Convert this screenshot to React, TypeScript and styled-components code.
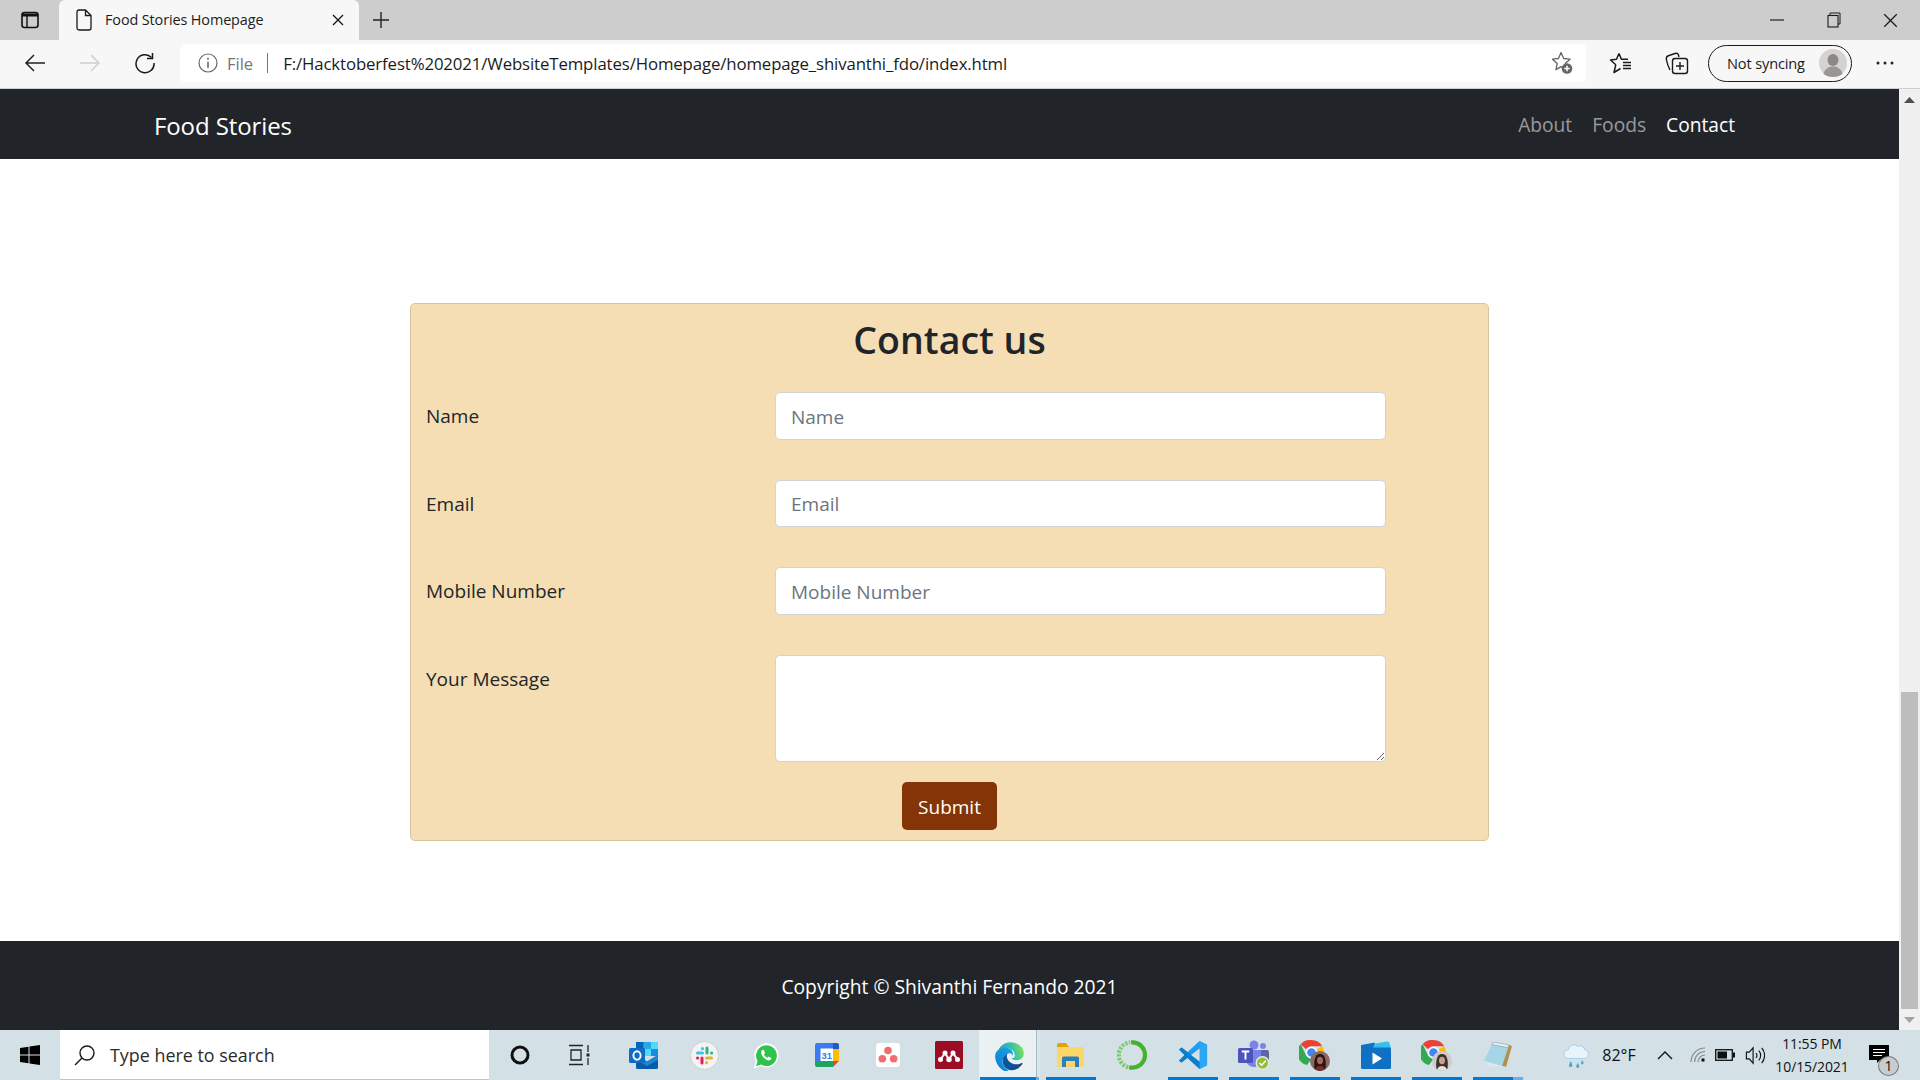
import React from "react";
import styled, { createGlobalStyle } from "styled-components";

const FONT = `"Open Sans", "Noto Sans", "Liberation Sans", sans-serif`;

const Global = createGlobalStyle`
  html, body { margin: 0; padding: 0; height: 100%; overflow: hidden; background: #fff; }
  body { font-family: ${FONT}; color: #212529; }
  * { box-sizing: border-box; }
`;

const Screen = styled.div`
  width: 1920px;
  height: 1080px;
  display: flex;
  flex-direction: column;
  overflow: hidden;
`;

/* ---------- browser chrome ---------- */
const TabStrip = styled.div`
  height: 40px;
  background: #cdcdcd;
  display: flex;
  align-items: center;
  flex: none;
`;
const TabActions = styled.div`
  width: 59px;
  height: 40px;
  display: flex;
  align-items: center;
  justify-content: center;
`;
const Tab = styled.div`
  width: 300px;
  height: 40px;
  background: #f7f7f7;
  border-radius: 6px 6px 0 0;
  display: flex;
  align-items: center;
  padding: 0 15px 0 16px;
`;
const TabTitle = styled.span`
  flex: 1;
  margin-left: 12px;
  padding-bottom: 1px;
  font-size: 14.4px;
  letter-spacing: -0.1px;
  color: #1c1c1c;
  white-space: nowrap;
`;
const NewTab = styled.div`
  width: 44px;
  height: 40px;
  display: flex;
  align-items: center;
  justify-content: center;
`;
const WindowControls = styled.div`
  margin-left: auto;
  display: flex;
  padding-right: 1px;
`;
const WindowButton = styled.div`
  width: 57px;
  height: 36px;
  display: flex;
  align-items: center;
  justify-content: center;
`;
const Toolbar = styled.div`
  height: 49px;
  background: #f7f7f7;
  border-bottom: 1px solid #cfcfcf;
  display: flex;
  align-items: center;
  flex: none;
  padding-bottom: 2px;
`;
const NavIcons = styled.div`
  width: 180px;
  display: flex;
  padding-left: 7px;
`;
const ToolIcon = styled.div`
  width: 55px;
  height: 36px;
  display: flex;
  align-items: center;
  justify-content: center;
`;
const AddressBar = styled.div`
  width: 1406px;
  height: 38px;
  background: #fff;
  border-radius: 5px;
  display: flex;
  align-items: center;
  padding: 0 11px 0 18px;
  font-size: 16.8px;
`;
const FileLabel = styled.span`
  margin-left: 9px;
  color: #767676;
  font-size: 16.5px;
`;
const Divider = styled.span`
  width: 1px;
  height: 20px;
  background: #767676;
  margin: 0 15px 0 14px;
`;
const Url = styled.span`
  flex: 1;
  color: #1b1b1b;
  white-space: nowrap;
  letter-spacing: -0.12px;
`;
const ToolRight = styled.div`
  display: flex;
  align-items: center;
  margin-left: 7px;
`;
const SquareIcon = styled.div`
  width: 56px;
  height: 36px;
  display: flex;
  align-items: center;
  justify-content: center;
`;
const SyncPill = styled.div`
  width: 144px;
  height: 37px;
  margin-left: 3px;
  border: 1.5px solid #1a1a1a;
  border-radius: 19px;
  display: flex;
  align-items: center;
  justify-content: space-between;
  padding: 0 4px 0 18px;
  font-size: 14.6px;
  letter-spacing: -0.15px;
  color: #1b1b1b;
`;
const Dots = styled.div`
  width: 66px;
  display: flex;
  align-items: center;
  justify-content: center;
`;

/* ---------- page ---------- */
const Viewport = styled.div`
  flex: 1;
  min-height: 0;
  display: flex;
`;
const Page = styled.div`
  flex: 1;
  min-width: 0;
  display: flex;
  flex-direction: column;
  background: #fff;
`;
const Navbar = styled.nav`
  height: 70px;
  background: #212529;
  display: flex;
  align-items: center;
  justify-content: space-between;
  padding: 0 154px;
  flex: none;
`;
const Brand = styled.a`
  font-size: 24px;
  color: #fff;
  letter-spacing: -0.1px;
  padding-top: 3px;
`;
const NavLinks = styled.div`
  display: flex;
  gap: 20px;
  padding-right: 10px;
`;
const NavLink = styled.a<{ $active?: boolean }>`
  font-size: 19.2px;
  color: ${(p) => (p.$active ? "#fff" : "rgba(255,255,255,.55)")};
`;
const Main = styled.main`
  flex: 1;
  padding-top: 144px;
  display: flex;
  justify-content: center;
  align-items: flex-start;
`;
const Card = styled.form`
  width: 1079px;
  height: 538px;
  background: #f5deb3;
  border: 1px solid #d8c49c;
  border-radius: 5px;
  padding: 12px 15px 10px;
`;
const Title = styled.h2`
  margin: 0 0 28px;
  font-size: 37.5px;
  line-height: 48px;
  font-weight: 600;
  text-align: center;
  color: #212529;
`;
const Row = styled.div`
  display: grid;
  grid-template-columns: 349px 611px;
  margin-bottom: 40px;
`;
const LastRow = styled(Row)`
  margin-bottom: 20px;
`;
const Label = styled.label`
  display: block;
  height: 47.5px;
  padding-top: 1px;
  font-size: 19px;
  line-height: 47.5px;
  color: #212529;
`;
const Input = styled.input`
  height: 47.5px;
  width: 611px;
  padding: 2px 15px 0;
  border: 1px solid #ced4da;
  border-radius: 5px;
  background: #fff;
  font-family: ${FONT};
  font-size: 19px;
  outline: none;
  &::placeholder { color: #6c757d; opacity: 1; }
`;
const TextArea = styled.textarea`
  display: block;
  height: 107px;
  width: 611px;
  padding: 8px 15px;
  border: 1px solid #ced4da;
  border-radius: 5px;
  background: #fff;
  font-family: ${FONT};
  font-size: 19px;
  resize: vertical;
  outline: none;
`;
const SubmitRow = styled.div`
  display: flex;
  justify-content: center;
`;
const Submit = styled.button`
  width: 95px;
  height: 48px;
  padding: 2px 0 0;
  border: none;
  border-radius: 5px;
  background: #843406;
  color: #fff;
  font-family: ${FONT};
  font-size: 19px;
`;
const Footer = styled.footer`
  height: 89px;
  flex: none;
  background: #212529;
  color: #fff;
  display: flex;
  align-items: center;
  justify-content: center;
  font-size: 19.25px;
  padding-top: 2px;
`;

/* ---------- scrollbar ---------- */
const Scrollbar = styled.div`
  width: 21px;
  flex: none;
  background: #f0f0f0;
  display: flex;
  flex-direction: column;
`;
const ScrollButton = styled.div`
  height: 21px;
  flex: none;
  display: flex;
  align-items: center;
  justify-content: center;
`;
const ScrollTrack = styled.div`
  flex: 1;
  display: flex;
  flex-direction: column;
  justify-content: flex-end;
  align-items: center;
`;
const ScrollThumb = styled.div`
  width: 17px;
  height: 317px;
  background: #bdbdbd;
`;

/* ---------- taskbar ---------- */
const Taskbar = styled.div`
  height: 50px;
  flex: none;
  background: #d3e1e7;
  display: flex;
  align-items: stretch;
`;
const StartButton = styled.div`
  width: 60px;
  display: flex;
  align-items: center;
  justify-content: center;
`;
const SearchBox = styled.div`
  width: 429px;
  background: #fff;
  border-bottom: 1px solid #c4c4c4;
  display: flex;
  align-items: center;
  padding-left: 14px;
  font-size: 17.9px;
  color: #2b2b2b;
`;
const SearchText = styled.span`
  margin-left: 14px;
`;
const TaskButton = styled.div<{ $width?: number }>`
  width: ${(p) => p.$width ?? 61}px;
  display: flex;
  align-items: center;
  justify-content: center;
`;
const PinnedGroup = styled.div`
  margin-left: 5px;
  display: flex;
`;
const AppButton = styled.div<{ $active?: boolean; $running?: boolean; $split?: number }>`
  position: relative;
  width: 61px;
  display: flex;
  align-items: center;
  justify-content: center;
  background: ${(p) =>
    p.$active
      ? "linear-gradient(90deg, #ebf1f3 0 57px, #a9bcc5 57px 58px, #d8e5ea 58px)"
      : "transparent"};
  &::after {
    content: "";
    display: ${(p) => (p.$running || p.$active ? "block" : "none")};
    position: absolute;
    bottom: 0;
    height: 3px;
    left: ${(p) => (p.$active ? "1px" : "5.5px")};
    right: ${(p) => (p.$active ? "1px" : "5.5px")};
    background: linear-gradient(
      90deg,
      #0078d4 ${(p) => p.$split ?? 100}%,
      #6aaee6 ${(p) => p.$split ?? 100}%
    );
  }
`;
const Tray = styled.div`
  margin-left: auto;
  display: flex;
  align-items: center;
  color: #111;
`;
const TrayItem = styled.div<{ $w: number }>`
  width: ${(p) => p.$w}px;
  display: flex;
  align-items: center;
  justify-content: center;
  font-size: 16px;
`;
const Clock = styled.div`
  width: 92px;
  font-size: 14px;
  line-height: 23px;
  text-align: center;
  letter-spacing: -0.1px;
  color: #111;
`;
const Notify = styled.div`
  width: 62px;
  height: 50px;
  position: relative;
  display: flex;
  align-items: center;
  padding: 0 0 3px 11px;
`;
const NotifyBadge = styled.span`
  position: absolute;
  left: 20px;
  top: 26px;
  width: 21px;
  height: 20px;
  border-radius: 50%;
  background: #c9ccce;
  border: 1px solid #777;
  font-size: 14px;
  line-height: 18px;
  text-align: center;
  color: #111;
`;

/* ---------- icons ---------- */
const S = { fill: "none", stroke: "#1a1a1a", strokeWidth: 1.3 };

const TabsIcon = () => (
  <svg width="20" height="20" viewBox="0 0 20 20"><rect x="2" y="2.5" width="16" height="15" rx="2.5" fill="none" stroke="#111" strokeWidth="1.6"/><path d="M2 3.5h16v3H2z" fill="#111"/><path d="M7 6v11" stroke="#111" strokeWidth="1.4"/></svg>
);
const FileIcon = () => (
  <svg width="18" height="22" viewBox="0 0 18 22"><path d="M3.5 1h7L16 6.5V19a2 2 0 0 1-2 2H4a2 2 0 0 1-2-2V3a2 2 0 0 1 1.500-2zM10.500 1v5.500H16" {...S}/></svg>
);
const CloseX = ({ size = 12, w = 1.4 }: { size?: number; w?: number }) => (
  <svg width={size} height={size} viewBox="0 0 12 12"><path d="M1 1l10 10M11 1L1 11" stroke="#1a1a1a" strokeWidth={w} fill="none"/></svg>
);
const Plus = () => (
  <svg width="18" height="18" viewBox="0 0 18 18"><path d="M9 1v16M1 9h16" stroke="#222" strokeWidth="1.4"/></svg>
);
const Minimize = () => (
  <svg width="14" height="14" viewBox="0 0 14 14"><path d="M0 7h14" stroke="#222" strokeWidth="1.2"/></svg>
);
const Restore = () => (
  <svg width="14" height="16" viewBox="0 0 14 16"><path d="M3 3V1h10v11h-2" {...S} strokeWidth={1}/><rect x="1" y="3.500" width="10" height="11.500" {...S} strokeWidth={1.1}/></svg>
);
const Back = () => (
  <svg width="22" height="20" viewBox="0 0 22 20"><path d="M21 10H2M10 2l-8 8 8 8" fill="none" stroke="#222" strokeWidth="1.5"/></svg>
);
const Forward = () => (
  <svg width="22" height="20" viewBox="0 0 22 20"><path d="M1 10h19M12 2l8 8-8 8" fill="none" stroke="#cfcfcf" strokeWidth="1.5"/></svg>
);
const Refresh = () => (
  <svg width="22" height="22" viewBox="0 0 22 22"><path d="M17.500 5.500A9 9 0 1 0 20 11" {...S} strokeWidth={1.5}/><path d="M18.500 1v5.500H13" {...S} strokeWidth={1.5}/></svg>
);
const Info = () => (
  <svg width="20" height="20" viewBox="0 0 20 20"><circle cx="10" cy="10" r="9" fill="none" stroke="#666" strokeWidth="1.200"/><path d="M10 8.500V15" stroke="#666" strokeWidth="1.500"/><circle cx="10" cy="5.800" r="1" fill="#666"/></svg>
);
const StarPlus = () => (
  <svg width="24" height="24" viewBox="0 0 24 24"><path d="M10 1.500l2.700 6 6.300.7-4.700 4.300 1.200 6.300-5.500-3.200-5 3 1.200-6.100L1.500 8.200l6-.7z" fill="none" stroke="#666" strokeWidth="1.300" strokeLinejoin="round"/><circle cx="16" cy="17.500" r="5.300" fill="#666"/><path d="M16 14.800v5.400M13.300 17.500h5.400" stroke="#fff" strokeWidth="1.500"/></svg>
);
const StarList = () => (
  <svg width="24" height="24" viewBox="0 0 24 24"><path d="M10 2.500L12.400 8.300H19M6.800 13.700L1.500 9l6-.7L10 2.500M6.800 13.700L5 21.500l6.500-4" {...S} strokeWidth={1.500} strokeLinejoin="round"/><path d="M14 11.500h8M14 14.500h8M14 17.500h8" stroke="#1a1a1a" strokeWidth="1.400"/></svg>
);
const Collections = () => (
  <svg width="24" height="26" viewBox="0 0 24 26"><path d="M5 20C3.500 17 2 13 1.500 10 1 8 2 6 4 5.500l6-2c1.500-.4 3 .2 3.500 1.500L14 7" {...S} strokeWidth={1.400}/><rect x="7.500" y="8.500" width="15" height="15" rx="2.500" {...S} strokeWidth={1.400}/><path d="M15 12v8M11 16h8" {...S} strokeWidth={1.400}/></svg>
);
const Avatar = () => (
  <svg width="28" height="28" viewBox="0 0 28 28"><circle cx="14" cy="14" r="14" fill="#d5d3cf"/><ellipse cx="14" cy="11" rx="5.500" ry="6" fill="#8c8985"/><path d="M4.500 25c1-5 5-7.500 9.500-7.500s8.500 2.500 9.500 7.500c-2.500 2-6 3-9.500 3s-7-1-9.500-3z" fill="#9a9793"/></svg>
);
const More = () => (
  <svg width="18" height="4" viewBox="0 0 18 4"><circle cx="2" cy="2" r="1.500" fill="#222"/><circle cx="9" cy="2" r="1.500" fill="#222"/><circle cx="16" cy="2" r="1.500" fill="#222"/></svg>
);
const Arrow = ({ down }: { down?: boolean }) => (
  <svg width="11" height="6" viewBox="0 0 11 6"><path d={down ? "M0 0h11L5.500 6z" : "M5.500 0L11 6H0z"} fill={down ? "#a3a3a3" : "#505050"}/></svg>
);
const WinLogo = () => (
  <svg width="20" height="20" viewBox="0 0 20 20"><path d="M0 3l8.500-1.200V9.500H0zM9.500 1.600L20 0v9.500H9.500zM0 10.500h8.500v7.700L0 17zM9.500 10.500H20V20L9.500 18.400z" fill="#000"/></svg>
);
const SearchGlass = () => (
  <svg width="22" height="22" viewBox="0 0 22 22"><circle cx="13" cy="9" r="7" fill="none" stroke="#1a1a1a" strokeWidth="1.400"/><path d="M8 14l-7 7" stroke="#1a1a1a" strokeWidth="1.500"/></svg>
);
const Cortana = () => (
  <svg width="20" height="20" viewBox="0 0 20 20"><circle cx="10" cy="10" r="8" fill="none" stroke="#111" strokeWidth="3"/></svg>
);
const TaskView = () => (
  <svg width="22" height="22" viewBox="0 0 22 22"><path d="M1 1.500h14M1 20.500h14M3 6h10v10H3zM20 1v7M20 14v7" fill="none" stroke="#222" strokeWidth="1.300"/><rect x="18.500" y="9.500" width="3" height="3" fill="#222"/></svg>
);
const Outlook = () => (
  <svg width="29" height="27" viewBox="0 0 29 27"><path d="M7 1.500A1.500 1.500 0 0 1 8.500 0h19A1.500 1.500 0 0 1 29 1.500V14H7z" fill="#1490df"/><path d="M7 0h7.500v7H7z" fill="#0364b8"/><path d="M14.500 0H22v7h-7.500z" fill="#28a8ea"/><path d="M22 0h5.500A1.500 1.500 0 0 1 29 1.500V7h-7zM14.500 7H22v7h-7.500z" fill="#50d9ff"/><path d="M22 7h7v7h-7zM7 7h7.500v7H7z" fill="#1a8ce0"/><path d="M7 13l11 6.500L29 13v12.500a1.500 1.500 0 0 1-1.500 1.500h-19A1.500 1.500 0 0 1 7 25.500z" fill="#0a5aa8"/><path d="M7 13l11 6.500L29 13v5l-11 6-11-6z" fill="#1a86d6"/><rect x="0" y="6" width="16" height="15" rx="1.500" fill="#0f6cc4"/><ellipse cx="8" cy="13.500" rx="3.600" ry="4.200" fill="none" stroke="#fff" strokeWidth="1.900"/></svg>
);
const Slack = () => (
  <svg width="29" height="29" viewBox="0 0 29 29"><circle cx="14.500" cy="14.500" r="14" fill="#f4f3f3" stroke="#c9d0d3"/><g strokeWidth="3" strokeLinecap="round"><path d="M7.500 12h5" stroke="#36c5f0"/><path d="M12.500 7.500v.2" stroke="#36c5f0"/><path d="M17 7v5" stroke="#2eb67d"/><path d="M21.500 12h.2" stroke="#2eb67d"/><path d="M16.500 17h5" stroke="#ecb22e"/><path d="M16.500 21.500v.2" stroke="#ecb22e"/><path d="M12 17v5" stroke="#e01e5a"/><path d="M7.500 17h.2" stroke="#e01e5a"/></g></svg>
);
const WhatsApp = () => (
  <svg width="26" height="27" viewBox="0 0 30 31"><path d="M1 30.500l2.300-8.300A14 14 0 1 1 8.500 27.500z" fill="#fff"/><path d="M3.500 28l1.800-6A12 12 0 1 1 9.300 26z" fill="#2fc24c"/><path d="M11 9c-1.500.7-2 3-1 5.500 1.300 3 4 5.500 7 6.500 2 .5 4-.5 4.500-2.300l-3.500-2-1.500 1.500c-1.500-.6-3.300-2.300-4-4L14 12.500 12.300 9z" fill="#fff"/></svg>
);
const GCal = () => (
  <svg width="24" height="24" viewBox="0 0 24 24"><path d="M0 2A2 2 0 0 1 2 0h16v6H6v12H0z" fill="#3b7bf0"/><path d="M18 0h4a2 2 0 0 1 2 2v4h-6z" fill="#1e5bc6"/><rect x="18" y="6" width="6" height="12" fill="#fbbc04"/><path d="M0 18h18v6H2a2 2 0 0 1-2-2z" fill="#1ea362"/><path d="M18 18h6l-6 6z" fill="#ea4335"/><rect x="5.500" y="5.500" width="12.500" height="12.500" fill="#fff"/><text x="11.700" y="15.800" fontSize="9.500" fontFamily="Liberation Sans, sans-serif" fontWeight="700" textAnchor="middle" fill="#3b7bf0">31</text></svg>
);
const Asana = () => (
  <svg width="24" height="24" viewBox="0 0 24 24"><rect width="24" height="24" rx="3.500" fill="#fff"/><circle cx="12" cy="7.500" r="3.800" fill="#f26d6d"/><circle cx="6.300" cy="15.800" r="3.800" fill="#f26d6d"/><circle cx="17.700" cy="15.800" r="3.800" fill="#f26d6d"/></svg>
);
const Mendeley = () => (
  <svg width="28" height="28" viewBox="0 0 28 28"><rect width="28" height="28" rx="1.500" fill="#9b0c25"/><path d="M5.500 18.500L10 12l4 6.500 4-6.500 4.500 6.500" fill="none" stroke="#fff" strokeWidth="2"/><g fill="#fff"><circle cx="5.500" cy="18.500" r="2.500"/><circle cx="14" cy="18.500" r="2.700"/><circle cx="22.500" cy="18.500" r="2.500"/><circle cx="10" cy="12" r="2.500"/><circle cx="18" cy="12" r="2.500"/></g></svg>
);
const Edge = () => (
  <svg width="31" height="31" viewBox="0 0 32 32">
    <defs>
      <linearGradient id="edgeDark" x1="0" y1="0" x2="1" y2="0.300"><stop offset="0" stopColor="#0c59a4"/><stop offset="1" stopColor="#114a8b"/></linearGradient>
      <linearGradient id="edgeMid" x1="0.800" y1="0.300" x2="0.100" y2="0.900"><stop offset="0" stopColor="#1b9de2"/><stop offset="1" stopColor="#0f7fd0"/></linearGradient>
      <linearGradient id="edgeTop" x1="0" y1="0.700" x2="1" y2="0.500"><stop offset="0" stopColor="#1a9cd8"/><stop offset="0.600" stopColor="#35c1a8"/><stop offset="1" stopColor="#7ee05e"/></linearGradient>
    </defs>
    <path d="M28.800 23.600c-.4.200-.8.400-1.300.6-1.300.6-2.700.9-4.100.9-5.500 0-10.200-3.800-10.200-8.600 0-1.400.8-2.600 2-3.300-5 .2-6.300 5.400-6.300 8.500 0 8.600 7.900 9.500 9.600 9.500.9 0 2.300-.3 3.100-.5l.2-.1c3.200-1.100 5.900-3.300 7.700-6.200.1-.2-.1-.5-.3-.3z" fill="url(#edgeDark)"/>
    <path d="M13.200 30.200c-1-.6-1.900-1.400-2.600-2.400-3-4.100-2.100-9.900 2-12.900.4-.3.900-.6 1.400-.8.4-.2 1-.5 1.800-.5 1.100 0 2.100.5 2.800 1.400.4.500.6 1.200.6 1.800 0 0 2.700-9-9-9-4.900 0-9 4.700-9 8.800 0 2.600.6 5.100 1.700 7.400 3.700 8 12.800 11.900 21.200 9.100-2.900.9-6 .5-8.600-.9z" fill="url(#edgeMid)"/>
    <path d="M19 18.300c-.1.100-.4.300-.4.700 0 .3.200.6.600.9 1.600 1.100 4.700 1 4.700 1 1.200 0 2.400-.3 3.500-1 2.100-1.300 3.400-3.500 3.400-6 .03-2.500-.9-4.200-1.300-4.900C27.200 5 22.400 2.200 17 2.200 9.500 2.200 3.400 8.200 3.300 15.700c.1-4.100 4.100-7.400 9-7.400.4 0 2.700 0 4.800 1.100 1.900 1 2.900 2.200 3.600 3.400.7 1.300.8 2.900.8 3.500 0 .6-.3 1.500-.9 2.300z" fill="url(#edgeTop)"/>
  </svg>
);
const Folder = () => (
  <svg width="27" height="24" viewBox="0 0 27 24"><path d="M0 2a2 2 0 0 1 2-2h7l3 4H0z" fill="#e5a00d"/><path d="M0 4h26a1 1 0 0 1 1 1v18a1 1 0 0 1-1 1H1a1 1 0 0 1-1-1z" fill="#fcd667"/><path d="M5 24v-9a1.500 1.500 0 0 1 1.500-1.500h14A1.500 1.500 0 0 1 22 15v9h-4v-6H9v6z" fill="#2b7ec4"/></svg>
);
const GreenRing = () => (
  <svg width="30" height="30" viewBox="0 0 32 32"><path d="M15 2.500A13.500 13.500 0 1 1 13 29" fill="none" stroke="#46b12d" strokeWidth="4.500"/><path d="M12 29A13.500 13.500 0 0 1 14 2.500" fill="none" stroke="#7dc96c" strokeWidth="4.500" strokeDasharray="2.500 1.500"/></svg>
);
const VSCode = () => (
  <svg width="30" height="30" viewBox="0 0 32 32"><path d="M23 1l8 4v22l-8 4L10 19l-6 5-3-2 6-6-6-6 3-2 6 5z" fill="#1f9cf0"/><path d="M23 1l8 4v22l-8 4z" fill="#2aa6f3"/><path d="M1 10l3-2 19 15v8L10 19l-6 5-3-2 6-6z" fill="#0c7dc9"/><path d="M23 9v14l-9-7z" fill="#d3e1e7"/></svg>
);
const Teams = () => (
  <svg width="32" height="30" viewBox="0 0 32 30"><circle cx="25" cy="6" r="3" fill="#7b83eb"/><circle cx="16" cy="5" r="4.500" fill="#7b83eb"/><path d="M20 10h9a2 2 0 0 1 2 2v7c0 4-4 5-7 4z" fill="#6264a7"/><path d="M8 10h15v11c0 4-3 6-7 6s-8-3-8-7z" fill="#7b83eb"/><rect x="0" y="8" width="15" height="15" rx="1.500" fill="#4b53bc"/><path d="M3.800 11.500h7.400M7.500 11.500v8" stroke="#fff" strokeWidth="1.900"/><circle cx="24.500" cy="23" r="7" fill="#e6ecd8"/><circle cx="24.500" cy="23" r="5.500" fill="#8fbe3f"/><path d="M21.500 23l2.200 2.200 4-4.400" fill="none" stroke="#fff" strokeWidth="1.500"/></svg>
);
const Chrome = ({ hair = "#2a1712", skin = "#a8665a", dress = "#7a2d2d", bg = "#8a6a66" }: { hair?: string; skin?: string; dress?: string; bg?: string }) => (
  <svg width="31" height="31" viewBox="0 0 31 31"><path d="M12.500 0A12.500 12.500 0 0 1 23.300 6.250H12.500a6.250 6.250 0 0 0-5.400 3.100L1.700 4.200A12.500 12.500 0 0 1 12.500 0z" fill="#ea4335"/><path d="M1.700 4.200L7.100 15.600a6.250 6.250 0 0 0 5.400 3.150L8 25A12.500 12.500 0 0 1 1.700 4.200z" fill="#34a853"/><path d="M23.300 6.250A12.500 12.500 0 0 1 12.500 25l5.400-9.400a6.250 6.250 0 0 0 0-6.250z" fill="#fbbc04"/><circle cx="12.500" cy="12.500" r="5" fill="#4285f4" stroke="#fff" strokeWidth="1.300"/><circle cx="21" cy="21" r="10" fill={bg}/><path d="M15.500 29c-1-7 0-15 5.500-15s6.500 8 5.500 14.500c-3 2.500-8 2.500-11 .5z" fill={hair}/><ellipse cx="21" cy="20.500" rx="3" ry="3.800" fill={skin}/><path d="M16 29.500c1-2.500 2.800-3.500 5-3.500s4 1 5 3.500a10 10 0 0 1-10 0z" fill={dress}/></svg>
);
const ClipPlayer = () => (
  <svg width="30" height="28" viewBox="0 0 30 28"><path d="M0 5l26-4.500c1-.1 2 .5 2.500 1.500L30 7H0z" fill="#35c0f2"/><path d="M0 4l14-2.500L12 7H0z" fill="#0f70c4"/><rect x="0" y="6.500" width="30" height="21.500" rx="1.500" fill="#0f70c4"/><path d="M11.500 11.500l9.500 6-9.500 6z" fill="#fff"/></svg>
);
const Notepad = () => (
  <svg width="28" height="27" viewBox="0 0 28 27"><path d="M9 0l16 3-7 21L0 19z" fill="#a5d5e6"/><path d="M18 24l7-21 3 1-6 21z" fill="#b5904a"/><path d="M9 0l16 3-1 2.500L8 2.500z" fill="#eef3f3" stroke="#789" strokeWidth=".5"/><path d="M0 19l18 5 4 1-16-.5z" fill="#dce8ea"/></svg>
);
const Weather = () => (
  <svg width="26" height="28" viewBox="0 0 30 32"><path d="M6 20a5 5 0 0 1 0-10 6.500 6.500 0 0 1 11-4 5.500 5.500 0 0 1 8 4 5 5 0 0 1-1 10z" fill="#e8f3fb" stroke="#9ccbe9"/><path d="M9 23l-2 4a2 2 0 1 0 3.500 0zM17 25l-1.500 3a1.800 1.800 0 1 0 3 0zM22 22l-1 2.500a1.500 1.500 0 1 0 2.500 0z" fill="#4da3dc"/></svg>
);
const Caret = () => (
  <svg width="16" height="10" viewBox="0 0 16 10"><path d="M1 9l7-7 7 7" fill="none" stroke="#111" strokeWidth="1.400"/></svg>
);
const Wifi = () => (
  <svg width="16" height="16" viewBox="0 0 16 16" style={{ flex: "none" }}><path d="M1 15A14 14 0 0 1 15 1" fill="none" stroke="#888" strokeWidth="1.200"/><path d="M4.500 15A10.500 10.500 0 0 1 15 4.500" fill="none" stroke="#888" strokeWidth="1.200"/><path d="M8 15a7 7 0 0 1 7-7" fill="none" stroke="#888" strokeWidth="1.200"/><rect x="11.500" y="11.500" width="3" height="3" fill="#111"/></svg>
);
const Battery = () => (
  <svg width="20" height="12" viewBox="0 0 20 12"><rect x=".7" y=".7" width="16.600" height="10.600" fill="none" stroke="#111" strokeWidth="1.300"/><rect x="2.500" y="2.500" width="9.500" height="7" fill="#111"/><rect x="18" y="3.500" width="2" height="5" fill="#111"/></svg>
);
const Volume = () => (
  <svg width="20" height="21" viewBox="0 0 20 22"><path d="M1 7.500h3L8 3v16l-4-4.500H1z" fill="none" stroke="#111" strokeWidth="1.200"/><path d="M11 8.500a3.500 3.500 0 0 1 0 5M14 6a7.500 7.500 0 0 1 0 10M17 3a12 12 0 0 1 0 16" fill="none" stroke="#111" strokeWidth="1.200"/></svg>
);
const Chat = () => (
  <svg width="20" height="18" viewBox="0 0 20 18"><path d="M0 0h20v15h-9l-3 3v-3H0z" fill="#000"/><path d="M4 4.500h12M4 7.500h12M4 10.500h9" stroke="#fff" strokeWidth="1.200"/></svg>
);

const FIELDS = ["Name", "Email", "Mobile Number"];

const APPS: { key: string; node: React.ReactNode; active?: boolean; running?: boolean; split?: number }[] = [
  { key: "outlook", node: <Outlook /> },
  { key: "slack", node: <Slack /> },
  { key: "whatsapp", node: <WhatsApp /> },
  { key: "gcal", node: <GCal /> },
  { key: "asana", node: <Asana /> },
  { key: "mendeley", node: <Mendeley /> },
  { key: "edge", node: <Edge />, active: true, split: 95 },
  { key: "folder", node: <Folder />, running: true },
  { key: "ring", node: <GreenRing /> },
  { key: "vscode", node: <VSCode />, running: true },
  { key: "teams", node: <Teams />, running: true },
  { key: "chrome1", node: <Chrome />, running: true },
  { key: "clip", node: <ClipPlayer />, running: true },
  { key: "chrome2", node: <Chrome hair="#3a322e" skin="#c9a08c" dress="#e4e0dc" bg="#cfcac6" />, running: true },
  { key: "notepad", node: <Notepad />, running: true, split: 80 },
];

export default function App() {
  return (
    <Screen>
      <Global />
      <TabStrip>
        <TabActions><TabsIcon /></TabActions>
        <Tab>
          <FileIcon />
          <TabTitle>Food Stories Homepage</TabTitle>
          <CloseX />
        </Tab>
        <NewTab><Plus /></NewTab>
        <WindowControls>
          <WindowButton><Minimize /></WindowButton>
          <WindowButton><Restore /></WindowButton>
          <WindowButton><CloseX size={15} w={1} /></WindowButton>
        </WindowControls>
      </TabStrip>
      <Toolbar>
        <NavIcons>
          <ToolIcon><Back /></ToolIcon>
          <ToolIcon><Forward /></ToolIcon>
          <ToolIcon><Refresh /></ToolIcon>
        </NavIcons>
        <AddressBar>
          <Info />
          <FileLabel>File</FileLabel>
          <Divider />
          <Url>F:/Hacktoberfest%202021/WebsiteTemplates/Homepage/homepage_shivanthi_fdo/index.html</Url>
          <StarPlus />
        </AddressBar>
        <ToolRight>
          <SquareIcon><StarList /></SquareIcon>
          <SquareIcon><Collections /></SquareIcon>
          <SyncPill>
            Not syncing
            <Avatar />
          </SyncPill>
          <Dots><More /></Dots>
        </ToolRight>
      </Toolbar>
      <Viewport>
        <Page>
          <Navbar>
            <Brand>Food Stories</Brand>
            <NavLinks>
              <NavLink>About</NavLink>
              <NavLink>Foods</NavLink>
              <NavLink $active>Contact</NavLink>
            </NavLinks>
          </Navbar>
          <Main>
            <Card>
              <Title>Contact us</Title>
              {FIELDS.map((f) => (
                <Row key={f}>
                  <Label>{f}</Label>
                  <Input placeholder={f} />
                </Row>
              ))}
              <LastRow>
                <Label>Your Message</Label>
                <TextArea />
              </LastRow>
              <SubmitRow>
                <Submit type="button">Submit</Submit>
              </SubmitRow>
            </Card>
          </Main>
          <Footer>Copyright © Shivanthi Fernando 2021</Footer>
        </Page>
        <Scrollbar>
          <ScrollButton><Arrow /></ScrollButton>
          <ScrollTrack><ScrollThumb /></ScrollTrack>
          <ScrollButton><Arrow down /></ScrollButton>
        </Scrollbar>
      </Viewport>
      <Taskbar>
        <StartButton><WinLogo /></StartButton>
        <SearchBox>
          <SearchGlass />
          <SearchText>Type here to search</SearchText>
        </SearchBox>
        <TaskButton><Cortana /></TaskButton>
        <TaskButton $width={58}><TaskView /></TaskButton>
        <PinnedGroup>
          {APPS.map((t) => (
            <AppButton key={t.key} $active={t.active} $running={t.running} $split={t.split}>{t.node}</AppButton>
          ))}
        </PinnedGroup>
        <Tray>
          <TrayItem $w={44}><Weather /></TrayItem>
          <TrayItem $w={42}>82°F</TrayItem>
          <TrayItem $w={50}><Caret /></TrayItem>
          <TrayItem $w={16}><Wifi /></TrayItem>
          <TrayItem $w={38}><Battery /></TrayItem>
          <TrayItem $w={22}><Volume /></TrayItem>
          <Clock>11:55 PM<br />10/15/2021</Clock>
          <Notify>
            <Chat />
            <NotifyBadge>1</NotifyBadge>
          </Notify>
        </Tray>
      </Taskbar>
    </Screen>
  );
}
